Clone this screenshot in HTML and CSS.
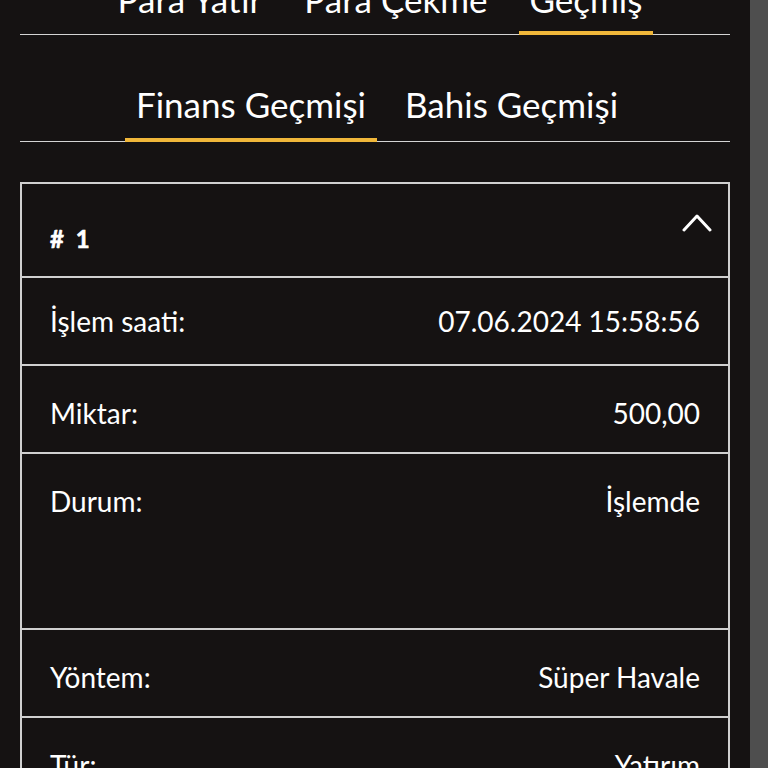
FILE: index.html
```html
<!DOCTYPE html>
<html lang="tr">
<head>
<meta charset="utf-8">
<title>Geçmiş</title>
<link rel="stylesheet" href="styles.css">
</head>
<body>
<div class="page">
  <nav class="tabs tabs-main">
    <div class="tab">Para Yatır</div>
    <div class="tab">Para Çekme</div>
    <div class="tab active">Geçmiş</div>
  </nav>
  <nav class="tabs tabs-sub">
    <div class="tab active">Finans Geçmişi</div>
    <div class="tab">Bahis Geçmişi</div>
  </nav>
  <section class="card">
    <div class="card-head">
      <span class="card-title"># 1</span>
      <svg class="chevron" width="30" height="19" viewBox="0 0 30 19" aria-hidden="true">
        <path d="M2 17 L15 3 L28 17" fill="none" stroke="#ffffff" stroke-width="3" stroke-linecap="round" stroke-linejoin="round"/>
      </svg>
    </div>
    <div class="row row-first"><span>İşlem saati:</span><span>07.06.2024 15:58:56</span></div>
    <div class="row"><span>Miktar:</span><span>500,00</span></div>
    <div class="row row-tall"><span>Durum:</span><span>İşlemde</span></div>
    <div class="row"><span>Yöntem:</span><span>Süper Havale</span></div>
    <div class="row"><span>Tür:</span><span>Yatırım</span></div>
  </section>
</div>
<div class="scrollbar"></div>
</body>
</html>
```
FILE: styles.css
```css
html, body {
  margin: 0;
  padding: 0;
  height: 768px;
  overflow: hidden;
}
body {
  display: flex;
  background: #151212;
  color: #ffffff;
  font-family: Lato, "Noto Sans", sans-serif;
}
.page {
  width: 750px;
  box-sizing: border-box;
  padding: 0 20px;
}
.scrollbar {
  width: 18px;
  height: 768px;
  background: #4e4e4e;
}
.tabs {
  display: flex;
  justify-content: center;
  gap: 20px;
  padding-left: 10px;
  border-bottom: 1.5px solid #d4d4d4;
}
.tab {
  font-size: 35px;
  line-height: 40px;
  padding: 0 11px 12px;
  border-bottom: 4px solid transparent;
  margin-bottom: -1.5px;
  white-space: nowrap;
}
.tab.active {
  border-bottom-color: #f0b73a;
}
.tabs-main {
  margin-top: -21px;
}
.tabs-sub {
  margin-top: 49.5px;
  gap: 17px;
  padding-left: 4px;
}
.tabs-sub .tab {
  padding-bottom: 14px;
}
.card {
  margin-top: 40px;
  border: 2px solid #d0d0d0;
  border-bottom: none;
}
.card-head {
  display: flex;
  justify-content: space-between;
  align-items: flex-start;
  height: 92px;
  padding: 0 16px 0 28px;
  border-bottom: 2px solid #d0d0d0;
}
.card-title {
  margin-top: 41px;
  font-size: 24px;
  line-height: 28px;
  font-weight: 700;
  -webkit-text-stroke: 0.6px #ffffff;
  word-spacing: 4px;
  letter-spacing: 1px;
}
.chevron {
  margin-top: 29px;
}
.row {
  display: flex;
  justify-content: space-between;
  padding: 30px 28px 22px 28px;
  font-size: 28px;
  line-height: 34px;
  border-bottom: 2px solid #d0d0d0;
}
.row-first {
  padding-top: 26px;
  padding-bottom: 26px;
}
.row-tall {
  padding-bottom: 110px;
}
```
